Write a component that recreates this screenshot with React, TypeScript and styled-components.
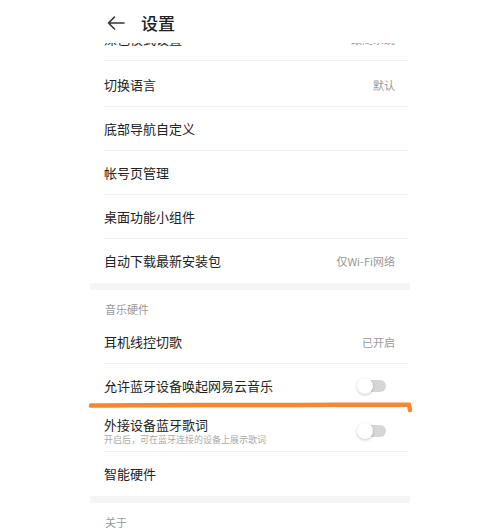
import React from 'react';
import styled, { createGlobalStyle } from 'styled-components';

const GlobalStyle = createGlobalStyle`
  html, body {
    margin: 0;
    padding: 0;
    background: #ffffff;
  }
  body {
    font-family: "Noto Sans CJK SC", "Noto Sans", sans-serif;
    color: #222;
  }
`;

interface IRow {
  title: string;
  value?: string;
  sub?: string;
  toggle?: boolean;
  last?: boolean;
}

const generalRows: IRow[] = [
  { title: '切换语言', value: '默认' },
  { title: '底部导航自定义' },
  { title: '帐号页管理' },
  { title: '桌面功能小组件' },
  { title: '自动下载最新安装包', value: '仅Wi-Fi网络', last: true },
];

const musicRows: IRow[] = [
  { title: '耳机线控切歌', value: '已开启' },
  { title: '允许蓝牙设备唤起网易云音乐', toggle: true },
  { title: '外接设备蓝牙歌词', sub: '开启后，可在蓝牙连接的设备上展示歌词', toggle: true },
  { title: '智能硬件', last: true },
];

const BackIcon = () => (
  <svg width="18" height="14" viewBox="0 0 18 14" fill="none">
    <path d="M17 7H1.5M7.5 1L1.5 7L7.5 13" stroke="#333" strokeWidth="1.6" strokeLinecap="round" strokeLinejoin="round" />
  </svg>
);

const Toggle = () => (
  <STrack>
    <SKnob />
  </STrack>
);

const renderRow = (row: IRow) => (
  <SRow key={row.title} last={row.last} tall={!!row.sub}>
    <STextCol>
      <STitle>{row.title}</STitle>
      {row.sub && <SSub>{row.sub}</SSub>}
    </STextCol>
    {row.value && <SValue>{row.value}</SValue>}
    {row.toggle && <Toggle />}
  </SRow>
);

export default function App() {
  return (
    <>
      <GlobalStyle />
      <SScreen>
        <SColumn>
          <SHeader>
            <BackIcon />
            <SHeaderTitle>设置</SHeaderTitle>
          </SHeader>
          {/* list scrolled under the header: only the bottom of this row shows */}
          <SClipped>
            <SClippedInner>
              {renderRow({ title: '深色模式设置', value: '跟随系统' })}
            </SClippedInner>
          </SClipped>
          {generalRows.map(renderRow)}
          <SBand />
          <SSectionTitle>音乐硬件</SSectionTitle>
          {musicRows.map(renderRow)}
          <SBand />
          <SSectionTitle>关于</SSectionTitle>
          <SMark width="328" height="16" viewBox="0 0 328 16" fill="none">
            <path
              d="M3 5.6 C 60 4.6, 140 5.2, 200 5 S 300 4.4, 321 4.8 L 322 10"
              stroke="#f28836"
              strokeWidth="4.5"
              strokeLinecap="round"
              strokeLinejoin="round"
            />
          </SMark>
        </SColumn>
      </SScreen>
    </>
  );
}

const SScreen = styled.div`
  width: 500px;
  height: 532px;
  overflow: hidden;
  display: flex;
  justify-content: center;
  align-items: flex-start;
`;

const SColumn = styled.div`
  position: relative;
  width: 320px;
  display: flex;
  flex-direction: column;
`;

const SHeader = styled.div`
  height: 43px;
  flex-shrink: 0;
  display: flex;
  align-items: center;
  padding: 3px 0 0 17px;
  box-sizing: border-box;
  gap: 16px;
`;

const SHeaderTitle = styled.div`
  font-size: 17px;
  font-weight: 500;
  color: #222;
  line-height: 20px;
`;

const SClipped = styled.div`
  height: 20px;
  overflow: hidden;
  flex-shrink: 0;
`;

const SClippedInner = styled.div`
  margin-top: -26px;
`;

interface ISRow {
  last?: boolean;
  tall?: boolean;
}

const SRow = styled.div<ISRow>`
  height: 44px;
  flex-shrink: 0;
  box-sizing: border-box;
  margin: 0 1px 0 14px;
  padding: ${(props) => (props.tall ? '2px' : '0')} 14px 0 0;
  display: flex;
  align-items: center;
  justify-content: space-between;
  border-bottom: 1px solid ${(props) => (props.last ? 'transparent' : '#f1f1f1')};
`;

const STextCol = styled.div`
  display: flex;
  flex-direction: column;
`;

const STitle = styled.div`
  font-size: 13px;
  line-height: 17px;
  color: #222;
`;

const SSub = styled.div`
  font-size: 9px;
  line-height: 12px;
  color: #aaa;
  margin-top: 1px;
`;

const SValue = styled.div`
  font-size: 11px;
  color: #999;
`;

const STrack = styled.div`
  width: 27px;
  height: 12px;
  margin-right: 9px;
  border-radius: 6px;
  background: #d6d6d6;
  display: flex;
  align-items: center;
`;

const SKnob = styled.div`
  width: 16px;
  height: 16px;
  border-radius: 50%;
  background: #fff;
  box-shadow: 0 1px 3px rgba(0, 0, 0, 0.22);
  margin-left: -2px;
`;

const SBand = styled.div`
  height: 7px;
  flex-shrink: 0;
  background: #f5f5f5;
`;

const SSectionTitle = styled.div`
  height: 30px;
  flex-shrink: 0;
  box-sizing: border-box;
  padding: 12px 0 0 15px;
  font-size: 11px;
  line-height: 14px;
  color: #999;
`;

const SMark = styled.svg`
  position: absolute;
  left: -2px;
  top: 400px;
`;
